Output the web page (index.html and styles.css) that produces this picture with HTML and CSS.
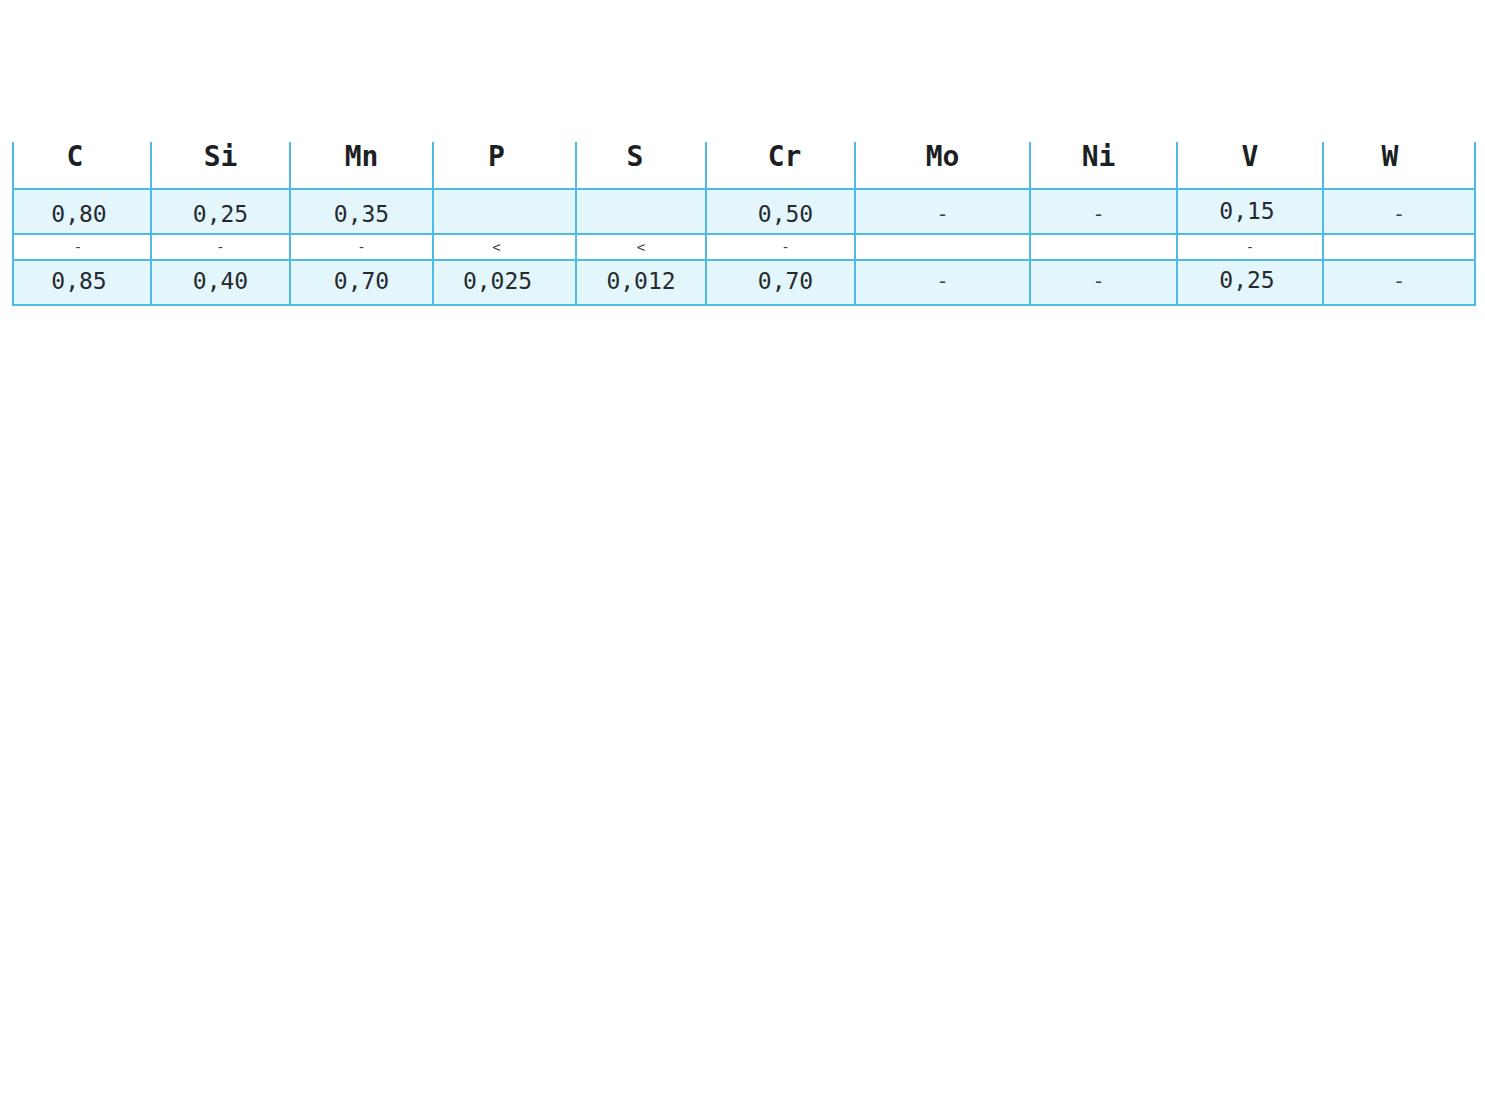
FILE: index.html
```html
<!DOCTYPE html>
<html lang="de">
<head>
<meta charset="utf-8">
<title>Chemische Zusammensetzung</title>
<link rel="stylesheet" href="styles.css">
</head>
<body>
<div class="page">
  <table class="chem">
    <colgroup>
      <col class="c1"><col class="c2"><col class="c3"><col class="c4"><col class="c5">
      <col class="c6"><col class="c7"><col class="c8"><col class="c9"><col class="c10">
    </colgroup>
    <thead>
      <tr class="head">
        <th>C</th><th>Si</th><th>Mn</th><th>P</th><th>S</th>
        <th>Cr</th><th>Mo</th><th>Ni</th><th>V</th><th>W</th>
      </tr>
    </thead>
    <tbody>
      <tr class="val first">
        <td>0,80</td><td>0,25</td><td>0,35</td><td></td><td></td>
        <td>0,50</td><td class="dash">-</td><td class="dash">-</td><td class="up">0,15</td><td class="dash">-</td>
      </tr>
      <tr class="sep">
        <td>-</td><td>-</td><td>-</td><td>&lt;</td><td>&lt;</td>
        <td>-</td><td></td><td></td><td>-</td><td></td>
      </tr>
      <tr class="val last">
        <td>0,85</td><td>0,40</td><td>0,70</td><td>0,025</td><td>0,012</td>
        <td>0,70</td><td class="dash">-</td><td class="dash">-</td><td class="up">0,25</td><td class="dash">-</td>
      </tr>
    </tbody>
  </table>
</div>
</body>
</html>
```

FILE: styles.css
```css
html, body {
  margin: 0;
  padding: 0;
  background: #ffffff;
}

.page {
  padding: 142px 0 0 12px;
}

.chem {
  border-collapse: collapse;
  table-layout: fixed;
  width: 1462px;
  font-family: "DejaVu Sans Mono", "Liberation Mono", monospace;
  color: #262a2e;
}

.c1 { width: 138px; }
.c2 { width: 139px; }
.c3 { width: 143px; }
.c4 { width: 143px; }
.c5 { width: 130px; }
.c6 { width: 149px; }
.c7 { width: 175px; }
.c8 { width: 147px; }
.c9 { width: 146px; }
.c10 { width: 152px; }

.chem th,
.chem td {
  border: 2px solid #4dbbe4;
  padding: 0;
  text-align: center;
  white-space: nowrap;
}

.head th {
  border-top: none;
  height: 46px;
  vertical-align: top;
  font-size: 28px;
  line-height: 30px;
  font-weight: bold;
  color: #1c1f24;
  padding-top: 0;
}

.head th:nth-child(1) { padding-right: 14px; }
.head th:nth-child(4) { padding-right: 16px; }
.head th:nth-child(5) { padding-right: 12px; }
.head th:nth-child(6) { padding-left: 8px; }
.head th:nth-child(8) { padding-right: 10px; }
.head th:nth-child(10) { padding-right: 18px; }

.val td {
  background: #e2f6fc;
  font-size: 23px;
  line-height: 26px;
  vertical-align: middle;
}

.val.first td {
  height: 39px;
  padding-top: 4px;
}

.val.last td {
  height: 40px;
  padding-top: 0;
  padding-bottom: 3px;
}

.val td:nth-child(1) { padding-right: 6px; }
.val td:nth-child(4) { padding-right: 14px; }
.val td:nth-child(6) { padding-left: 10px; }
.val td:nth-child(8) { padding-right: 10px; }

.val td.dash {
  font-size: 20px;
  color: #3a3e42;
}

.val.first td.up {
  height: 39px;
  padding-top: 0;
  padding-bottom: 2px;
  padding-right: 6px;
}

.val.last td.up {
  height: 37px;
  padding-top: 0;
  padding-bottom: 6px;
  padding-right: 6px;
}

.sep td {
  height: 24px;
  background: #ffffff;
  font-size: 14px;
  line-height: 16px;
  vertical-align: middle;
  color: #3a3e42;
}

.sep td:nth-child(1) { padding-right: 8px; }
.sep td:nth-child(4) { padding-right: 16px; }
.sep td:nth-child(6) { padding-left: 10px; }
```
